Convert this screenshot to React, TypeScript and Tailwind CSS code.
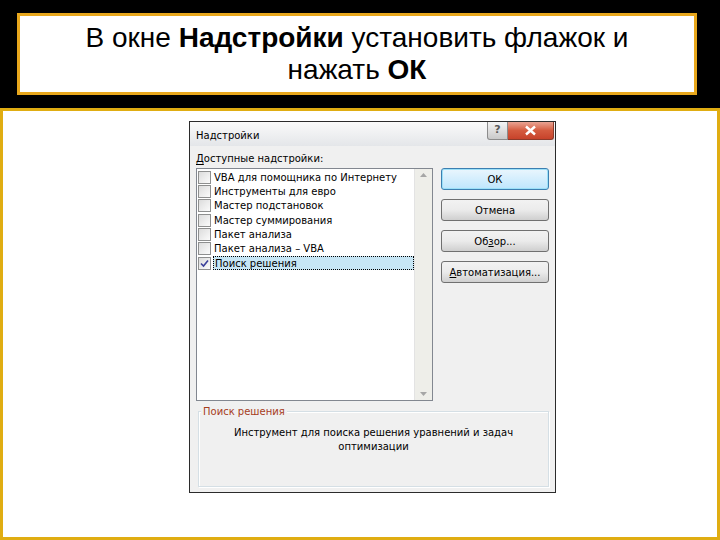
import React from "react";

const addins = [
  { name: "VBA для помощника по Интернету", checked: false },
  { name: "Инструменты для евро", checked: false },
  { name: "Мастер подстановок", checked: false },
  { name: "Мастер суммирования", checked: false },
  { name: "Пакет анализа", checked: false },
  { name: "Пакет анализа – VBA", checked: false },
  { name: "Поиск решения", checked: true },
];

function CheckBox({ checked }: { checked: boolean }) {
  return (
    <span className="flex h-[13px] w-[13px] shrink-0 items-center justify-center border border-[#8e8f8f] bg-gradient-to-br from-[#dcdcdc] to-[#fbfbfb]">
      {checked && (
        <svg width="9" height="9" viewBox="0 0 9 9">
          <path d="M1 4.5 L3.5 7 L8 1.5" fill="none" stroke="#3a3f9a" strokeWidth="1.6" />
        </svg>
      )}
    </span>
  );
}

function DialogButton({
  children,
  isDefault,
}: {
  children: React.ReactNode;
  isDefault?: boolean;
}) {
  return (
    <button
      className={`h-[22px] w-[108px] rounded-[3px] border text-[10px] text-black ${
        isDefault
          ? "border-[#3c7fb1] bg-gradient-to-b from-[#eaf6fd] to-[#bee6fd] shadow-[inset_0_0_0_1px_#9ce0f8]"
          : "border-[#707070] bg-gradient-to-b from-[#f2f2f2] via-[#ebebeb] to-[#cfcfcf]"
      }`}
    >
      {children}
    </button>
  );
}

function AddinsDialog() {
  return (
    <div className="flex h-[372px] w-[367px] flex-col border border-[#2b2b2b] bg-[#f0f0f0] font-['DejaVu_Sans',sans-serif] text-[10px] text-black">
      {/* Title bar */}
      <div className="flex h-[24px] items-start justify-between bg-gradient-to-b from-[#fafafa] to-[#e4e6e9] pl-[6px]">
        <span className="pt-[6px] text-[10px]">Надстройки</span>
        <div className="flex">
          <span className="flex h-[18px] w-[21px] items-center justify-center rounded-bl-[3px] border border-t-0 border-[#8c8c8c] bg-gradient-to-b from-[#f4f4f4] to-[#c9c9c9] text-[11px] font-bold text-[#5a5a5a]">
            ?
          </span>
          <span className="mr-[1px] flex h-[18px] w-[46px] items-center justify-center rounded-br-[3px] border border-t-0 border-l-0 border-[#8c3a2a] bg-gradient-to-b from-[#e8a393] via-[#d45b3f] to-[#c7422a]">
            <svg width="13" height="11" viewBox="0 0 13 11">
              <path d="M2 1.5 L11 9.5 M11 1.5 L2 9.5" stroke="#ffffff" strokeWidth="2.4" />
            </svg>
          </span>
        </div>
      </div>

      {/* Body */}
      <div className="flex flex-1 flex-col px-[6px] pt-[4px]">
        <div className="h-[18px] leading-[18px]">
          <span className="underline underline-offset-2">Д</span>оступные надстройки:
        </div>
        <div className="flex gap-[8px]">
          {/* List box */}
          <div className="flex h-[233px] w-[238px] border border-[#828790] bg-white">
            <div className="flex flex-1 flex-col pt-[1px]">
              {addins.map((a, i) => (
                <div key={a.name} className="flex h-[14.33px] items-center gap-[2px] pl-[1px]">
                  <CheckBox checked={a.checked} />
                  <span
                    className={`flex h-[14px] flex-1 items-center pl-[1px] ${
                      i === addins.length - 1
                        ? "border border-dotted border-black bg-[#c7e6f5]"
                        : ""
                    }`}
                  >
                    {a.name}
                  </span>
                </div>
              ))}
            </div>
            {/* Scrollbar */}
            <div className="flex w-[18px] flex-col items-center justify-between border-l border-[#e3e3e3] bg-[#eeeee9] py-[4px]">
              <svg width="7" height="4" viewBox="0 0 7 4">
                <path d="M0 4 L3.5 0 L7 4 Z" fill="#a6a6a6" />
              </svg>
              <svg width="7" height="4" viewBox="0 0 7 4">
                <path d="M0 0 L3.5 4 L7 0 Z" fill="#a6a6a6" />
              </svg>
            </div>
          </div>

          {/* Buttons */}
          <div className="flex flex-col gap-[9px]">
            <DialogButton isDefault>ОК</DialogButton>
            <DialogButton>Отмена</DialogButton>
            <DialogButton>
              Об<span className="underline">з</span>ор...
            </DialogButton>
            <DialogButton>
              <span className="underline">А</span>втоматизация...
            </DialogButton>
          </div>
        </div>

        {/* Group box */}
        <div className="relative mt-[10px] ml-[2px] h-[76px] w-[351px] border border-[#d5dfe5] shadow-[inset_1px_1px_0_#ffffff,1px_1px_0_#ffffff]">
          <span className="absolute -top-[8px] left-[2px] bg-[#f0f0f0] px-[2px] text-[#a63c1c]">
            Поиск решения
          </span>
          <p className="px-[8px] pt-[14px] text-center leading-[14px]">
            Инструмент для поиска решения уравнений и задач
            <br />
            оптимизации
          </p>
        </div>
      </div>
    </div>
  );
}

export default function App() {
  return (
    <div className="flex h-[540px] w-[720px] flex-col bg-black font-['Liberation_Sans',Arial,sans-serif]">
      {/* Slide title */}
      <div className="pl-[17px] pt-[13px]">
        <div className="flex h-[82px] w-[680px] items-center justify-center border-[3px] border-[#e8a71c] bg-white">
          <h1 className="text-center text-[28px] leading-[32px] text-black">
            В окне <b>Надстройки</b> установить флажок и
            <br />
            нажать <b>ОК</b>
          </h1>
        </div>
      </div>

      {/* Slide body */}
      <div className="mt-[13px] flex-1 border-[3px] border-[#e0ad12] bg-white pl-[186px] pt-[10px]">
        <AddinsDialog />
      </div>
    </div>
  );
}
